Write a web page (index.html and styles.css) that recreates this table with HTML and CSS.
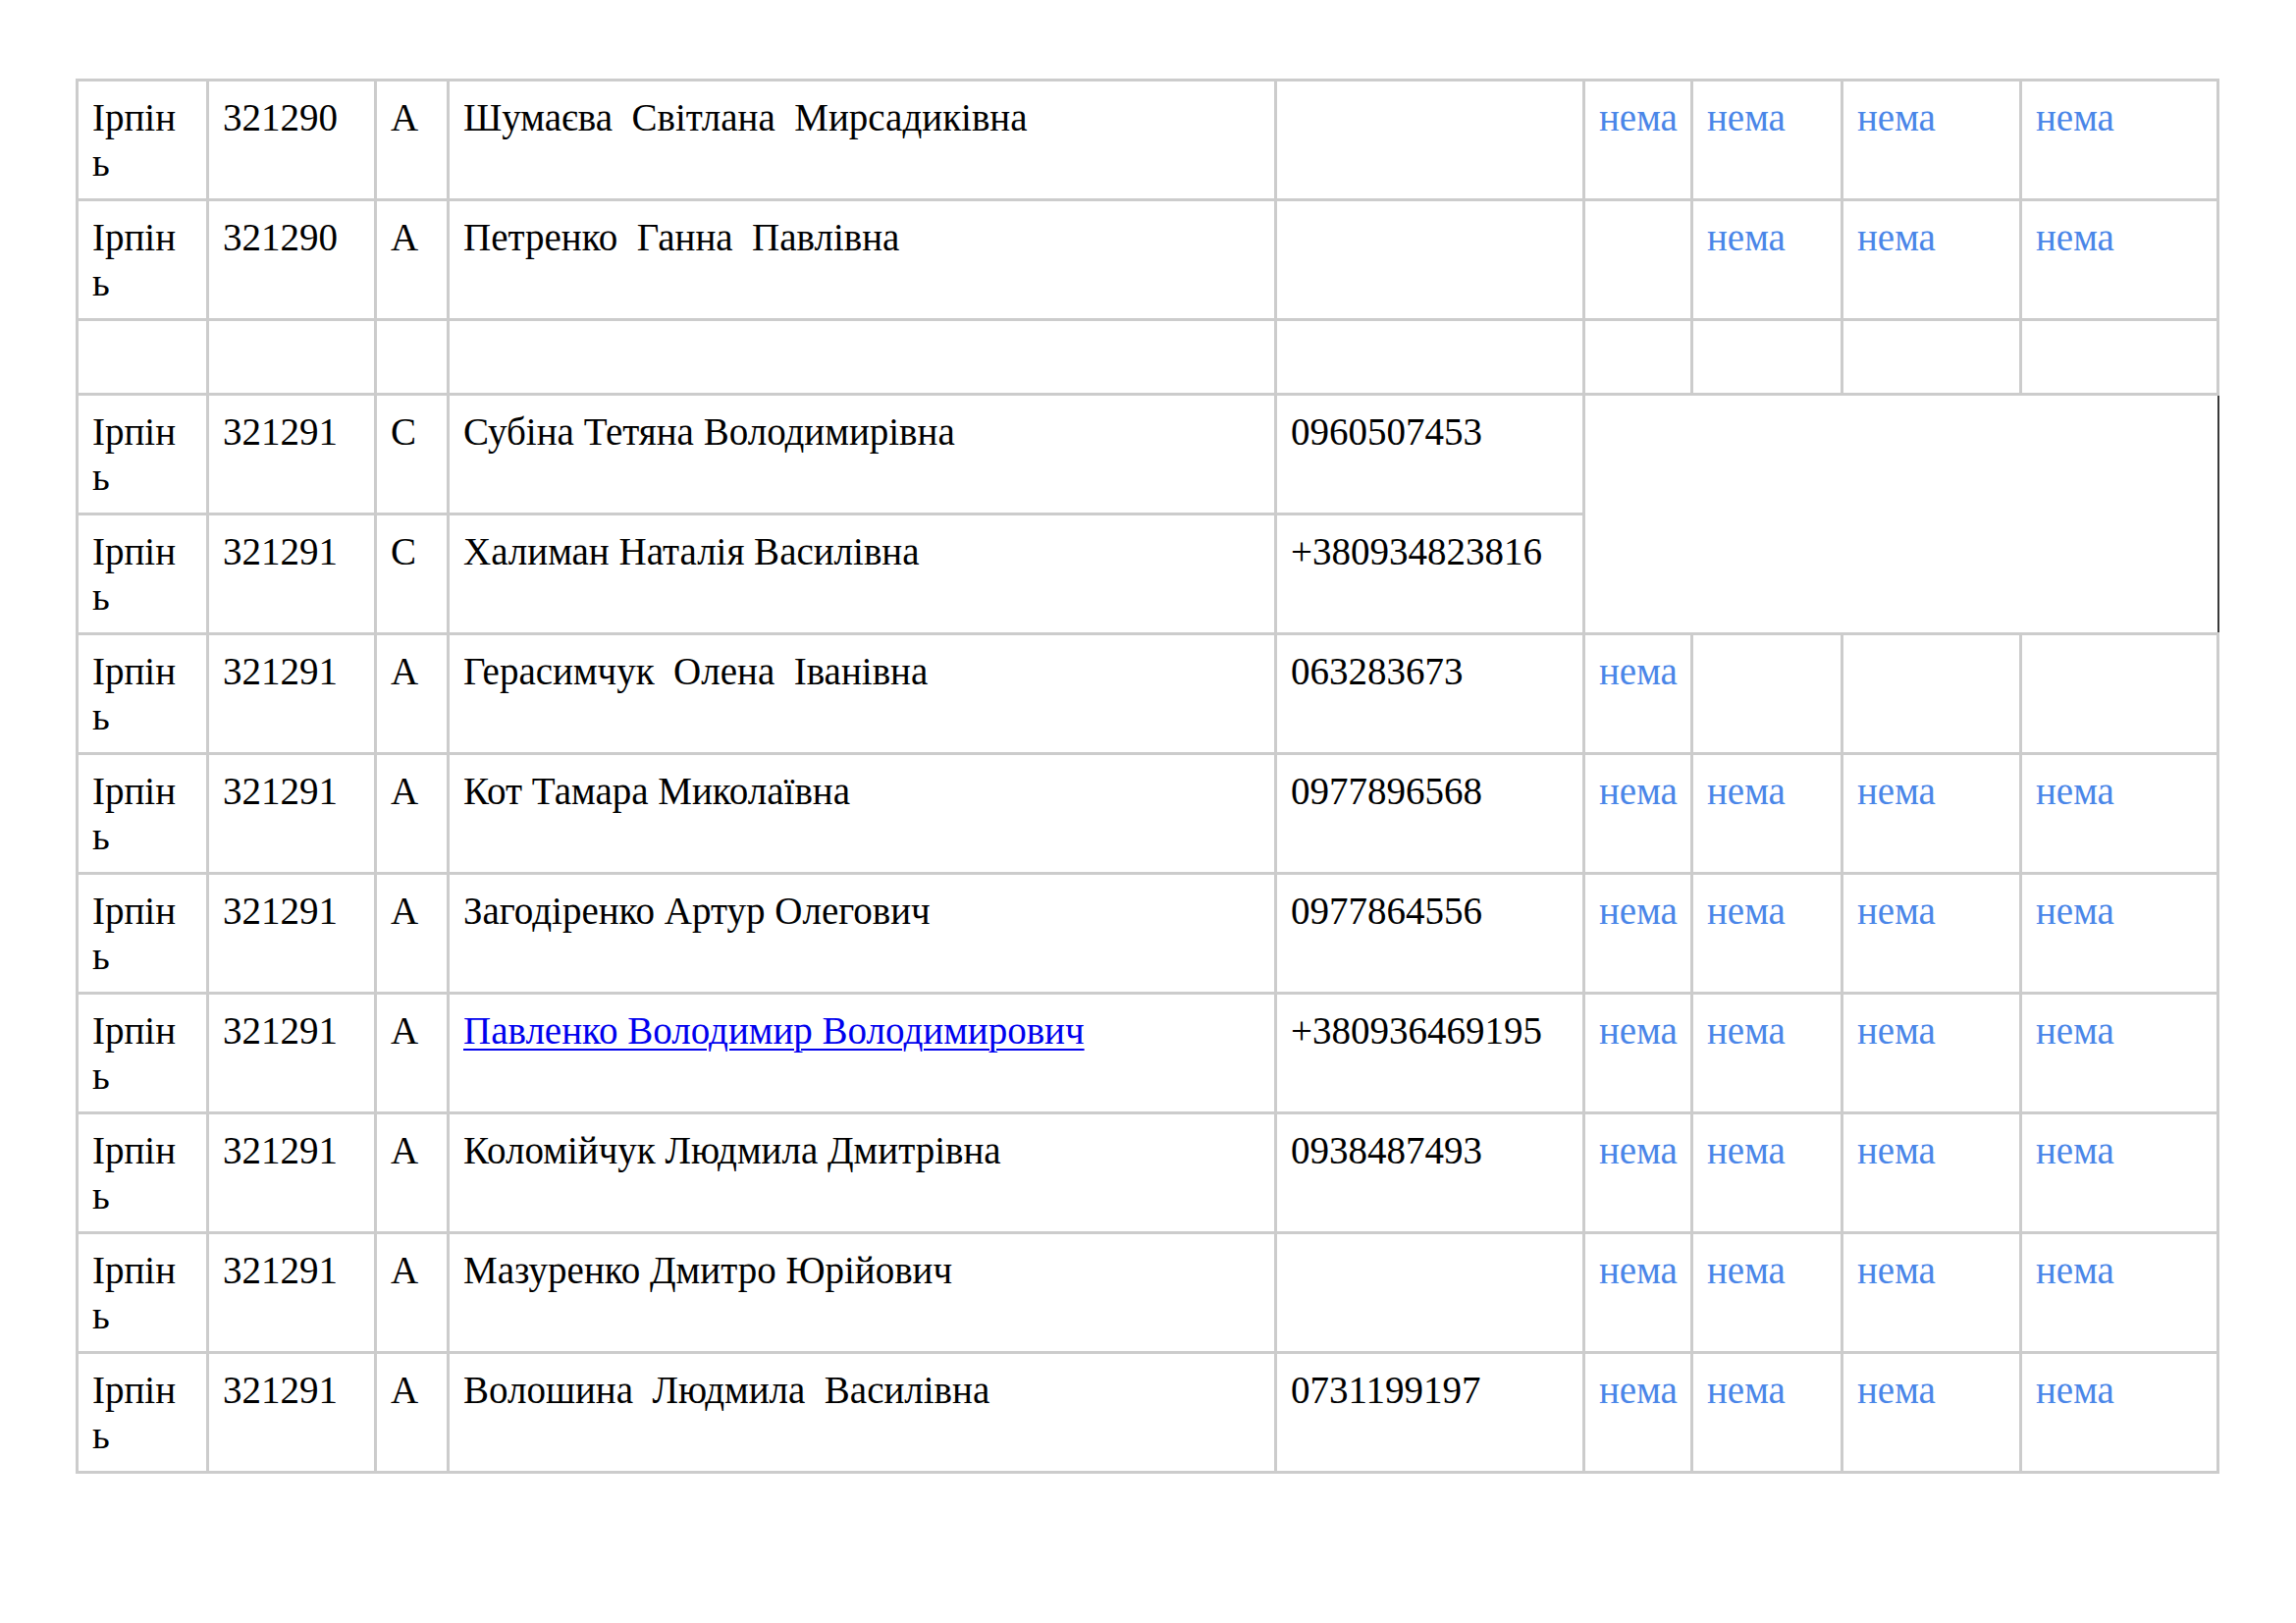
FILE: index.html
```html
<!DOCTYPE html>
<html lang="uk">
<head>
<meta charset="utf-8">
<title>Таблиця</title>
<link rel="stylesheet" href="styles.css">
</head>
<body>
<table class="grid">
  <colgroup>
    <col class="c1"><col class="c2"><col class="c3"><col class="c4"><col class="c5">
    <col class="c6"><col class="c7"><col class="c8"><col class="c9">
  </colgroup>
  <tbody>
    <tr>
      <td class="city">Ірпінь</td><td>321290</td><td>А</td>
      <td>Шумаєва&nbsp; Світлана&nbsp; Мирсадиківна</td><td></td>
      <td class="no">нема</td><td class="no">нема</td><td class="no">нема</td><td class="no">нема</td>
    </tr>
    <tr>
      <td class="city">Ірпінь</td><td>321290</td><td>А</td>
      <td>Петренко&nbsp; Ганна&nbsp; Павлівна</td><td></td>
      <td></td><td class="no">нема</td><td class="no">нема</td><td class="no">нема</td>
    </tr>
    <tr class="empty">
      <td></td><td></td><td></td><td></td><td></td><td></td><td></td><td></td><td></td>
    </tr>
    <tr>
      <td class="city">Ірпінь</td><td>321291</td><td>С</td>
      <td>Субіна Тетяна Володимирівна</td><td>0960507453</td>
      <td class="merged" colspan="4" rowspan="2"></td>
    </tr>
    <tr>
      <td class="city">Ірпінь</td><td>321291</td><td>С</td>
      <td>Халиман Наталія Василівна</td><td>+380934823816</td>
    </tr>
    <tr>
      <td class="city">Ірпінь</td><td>321291</td><td>А</td>
      <td>Герасимчук&nbsp; Олена&nbsp; Іванівна</td><td>063283673</td>
      <td class="no">нема</td><td></td><td></td><td></td>
    </tr>
    <tr>
      <td class="city">Ірпінь</td><td>321291</td><td>А</td>
      <td>Кот Тамара Миколаївна</td><td>0977896568</td>
      <td class="no">нема</td><td class="no">нема</td><td class="no">нема</td><td class="no">нема</td>
    </tr>
    <tr>
      <td class="city">Ірпінь</td><td>321291</td><td>А</td>
      <td>Загодіренко Артур Олегович</td><td>0977864556</td>
      <td class="no">нема</td><td class="no">нема</td><td class="no">нема</td><td class="no">нема</td>
    </tr>
    <tr>
      <td class="city">Ірпінь</td><td>321291</td><td>А</td>
      <td><a class="person" href="#">Павленко Володимир Володимирович</a></td><td>+380936469195</td>
      <td class="no">нема</td><td class="no">нема</td><td class="no">нема</td><td class="no">нема</td>
    </tr>
    <tr>
      <td class="city">Ірпінь</td><td>321291</td><td>А</td>
      <td>Коломійчук Людмила Дмитрівна</td><td>0938487493</td>
      <td class="no">нема</td><td class="no">нема</td><td class="no">нема</td><td class="no">нема</td>
    </tr>
    <tr>
      <td class="city">Ірпінь</td><td>321291</td><td>А</td>
      <td>Мазуренко Дмитро Юрійович</td><td></td>
      <td class="no">нема</td><td class="no">нема</td><td class="no">нема</td><td class="no">нема</td>
    </tr>
    <tr>
      <td class="city">Ірпінь</td><td>321291</td><td>А</td>
      <td>Волошина&nbsp; Людмила&nbsp; Василівна</td><td>0731199197</td>
      <td class="no">нема</td><td class="no">нема</td><td class="no">нема</td><td class="no">нема</td>
    </tr>
  </tbody>
</table>
</body>
</html>
```

FILE: styles.css
```css
html, body {
  margin: 0;
  padding: 0;
  background: #ffffff;
}

body {
  font-family: "Liberation Serif", "Times New Roman", serif;
  color: #000000;
}

.grid {
  margin: 80px 0 0 77px;
  border-collapse: collapse;
  table-layout: fixed;
  width: 2181px;
  font-size: 39px;
  line-height: 46px;
}

.c1 { width: 133px; }
.c2 { width: 171px; }
.c3 { width: 74px; }
.c4 { width: 843px; }
.c5 { width: 314px; }
.c6 { width: 110px; }
.c7 { width: 153px; }
.c8 { width: 182px; }
.c9 { width: 201px; }

.grid td {
  border: 3px solid #cccccc;
  padding: 14px 14px 13px 14px;
  vertical-align: top;
  height: 92px;
  box-sizing: content-box;
}

.grid tr.empty td {
  height: 46px;
}

.grid td.city {
  padding-right: 22px;
  word-break: break-all;
}

.grid td.no {
  color: #4a86e8;
}

.grid td.merged {
  border-right: 2px solid #3a3a3a;
}

.person {
  color: #0000ee;
  text-decoration: underline;
  text-decoration-thickness: 2px;
  text-underline-offset: 5px;
}
```
